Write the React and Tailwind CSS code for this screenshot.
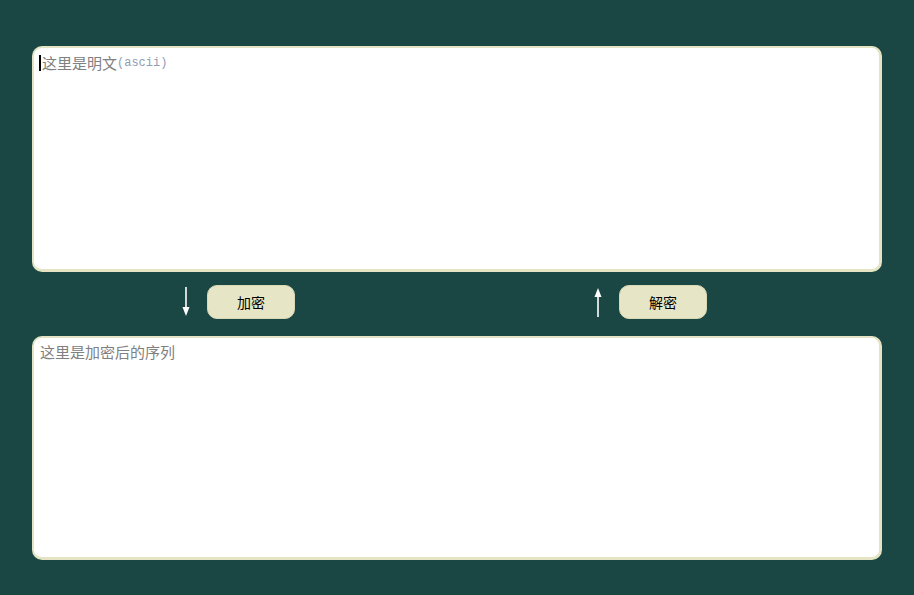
import React from 'react';

const DownArrow = () => (
  <svg width="10" height="30" viewBox="0 0 10 30" className="block">
    <line x1="5" y1="0" x2="5" y2="22" stroke="#ffffff" strokeWidth="1.6" />
    <path d="M1.5 20 L8.5 20 L5 29 Z" fill="#ffffff" />
  </svg>
);

const UpArrow = () => (
  <svg width="10" height="30" viewBox="0 0 10 30" className="block">
    <line x1="5" y1="8" x2="5" y2="30" stroke="#ffffff" strokeWidth="1.6" />
    <path d="M1.5 10 L8.5 10 L5 1 Z" fill="#ffffff" />
  </svg>
);

export default function App() {
  return (
    <div
      className="w-[914px] h-[595px] bg-[#1a4744] px-[32px] pt-[46px] overflow-hidden"
      style={{ fontFamily: '"Noto Sans CJK SC", "Liberation Sans", sans-serif' }}
    >
      {/* plain text */}
      <div className="h-[226px] bg-white rounded-[10px] border-2 border-r-[3px] border-b-[3px] border-[#e4e4c4] pl-[5px] pt-[5px]">
        <div className="flex items-center leading-[20px] text-[15px] text-[#808080]">
          <span className="w-[2px] h-[16px] bg-black mr-[1px]" />
          <span>这里是明文</span>
          <span className="text-[12px] text-[#8f9db2]" style={{ fontFamily: '"Liberation Mono", monospace' }}>(ascii)</span>
        </div>
      </div>

      {/* controls */}
      <div className="flex items-center mt-[13px] mb-[17px] pl-[149px] gap-[298px]">
        <div className="flex items-center gap-[16px]">
          <DownArrow />
          <button className="w-[88px] h-[34px] rounded-[10px] bg-[#e6e6c6] border border-[#d8d8b4] text-[14px] text-black">
            加密
          </button>
        </div>
        <div className="flex items-center gap-[16px]">
          <UpArrow />
          <button className="w-[88px] h-[34px] rounded-[10px] bg-[#e6e6c6] border border-[#d8d8b4] text-[14px] text-black">
            解密
          </button>
        </div>
      </div>

      {/* cipher */}
      <div className="h-[224px] bg-white rounded-[10px] border-2 border-r-[3px] border-b-[3px] border-[#e4e4c4] pl-[6px] pt-[4px]">
        <div className="leading-[20px] text-[15px] text-[#808080]">这里是加密后的序列</div>
      </div>
    </div>
  );
}
